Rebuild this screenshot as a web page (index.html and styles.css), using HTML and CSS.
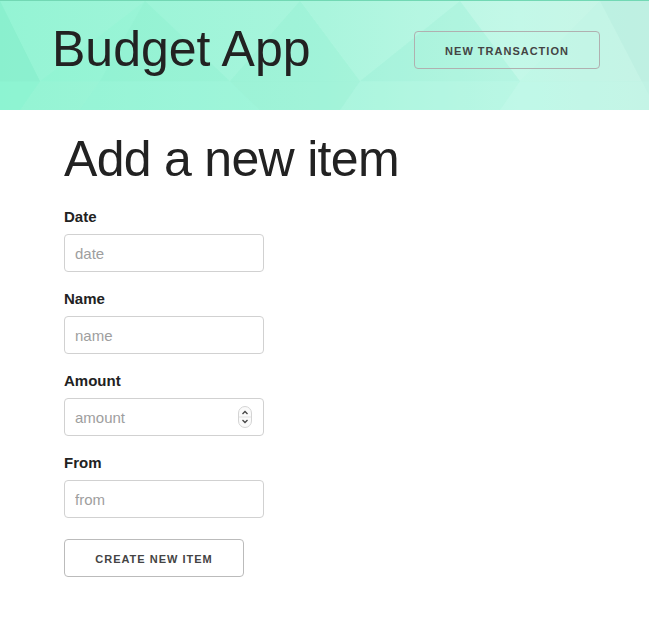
FILE: index.html
```html
<!DOCTYPE html>
<html lang="en">
<head>
<meta charset="utf-8">
<title>Budget App</title>
<link rel="stylesheet" href="styles.css">
</head>
<body>
<header class="header">
  <svg class="header-bg" width="649" height="110" viewBox="0 0 649 110" preserveAspectRatio="none" aria-hidden="true">
    <defs>
      <linearGradient id="g" x1="0" y1="0" x2="1" y2="0">
        <stop offset="0" stop-color="#8ff4d2"/>
        <stop offset="0.5" stop-color="#a6f5dc"/>
        <stop offset="0.8" stop-color="#bdf8e6"/>
        <stop offset="1" stop-color="#c4f2e4"/>
      </linearGradient>
    </defs>
    <rect width="649" height="110" fill="url(#g)"/>
    <polygon points="0,0 0,81 40,81" fill="#86ecca" opacity="0.45"/>
    <polygon points="40,81 145,0 0,0" fill="#ffffff" opacity="0.05"/>
    <polygon points="145,0 100,81 230,81" fill="#7fe8c6" opacity="0.14"/>
    <polygon points="230,81 300,0 145,0" fill="#ffffff" opacity="0.04"/>
    <polygon points="300,0 230,81 360,81" fill="#84e9c8" opacity="0.14"/>
    <polygon points="360,81 460,0 300,0" fill="#ffffff" opacity="0.05"/>
    <polygon points="460,0 360,81 520,81" fill="#8de8cb" opacity="0.16"/>
    <polygon points="520,81 600,0 460,0" fill="#ffffff" opacity="0.1"/>
    <polygon points="600,0 520,81 649,81 649,0" fill="#cdf9ec" opacity="0.25"/>
    <polygon points="600,0 649,0 649,95" fill="#b5ecdb" opacity="0.4"/>
    <polygon points="0,81 40,81 20,110 0,110" fill="#8cf3d1" opacity="0.5"/>
    <polygon points="40,81 100,81 80,110 20,110" fill="#ffffff" opacity="0.04"/>
    <polygon points="100,81 230,81 260,110 80,110" fill="#9af6d9" opacity="0.3"/>
    <polygon points="230,81 360,81 340,110 260,110" fill="#8fe9cc" opacity="0.2"/>
    <polygon points="360,81 520,81 500,110 340,110" fill="#b2f5e0" opacity="0.3"/>
    <polygon points="520,81 649,81 649,110 500,110" fill="#c6f9ea" opacity="0.35"/>
  </svg>
  <h1 class="brand">Budget App</h1>
  <button class="btn btn-header" type="button">New Transaction</button>
</header>

<main class="page">
  <h1 class="page-title">Add a new item</h1>
  <form class="item-form">
    <label class="field-label" for="date">Date</label>
    <input class="field-input" id="date" type="text" placeholder="date">

    <label class="field-label" for="name">Name</label>
    <input class="field-input" id="name" type="text" placeholder="name">

    <label class="field-label" for="amount">Amount</label>
    <div class="number-wrap">
      <input class="field-input field-number" id="amount" type="number" placeholder="amount">
      <svg class="spinner" width="14" height="22" viewBox="0 0 14 22" aria-hidden="true">
        <rect x="0.5" y="0.5" width="13" height="21" rx="6.5" fill="#fafafa" stroke="#d4d4d4"/>
        <line x1="1" y1="11" x2="13" y2="11" stroke="#e2e2e2"/>
        <polyline points="4.5,8 7,5.5 9.5,8" fill="none" stroke="#444" stroke-width="1.3"/>
        <polyline points="4.5,14 7,16.5 9.5,14" fill="none" stroke="#444" stroke-width="1.3"/>
      </svg>
    </div>

    <label class="field-label" for="from">From</label>
    <input class="field-input" id="from" type="text" placeholder="from">

    <button class="btn btn-create" type="button">Create new item</button>
  </form>
</main>
</body>
</html>
```

FILE: styles.css
```css
html, body {
  margin: 0;
  padding: 0;
  background: #fff;
}

body {
  font-family: "Liberation Sans", Arial, Helvetica, sans-serif;
  font-size: 15px;
  line-height: 1.6;
  color: #222;
}

.header {
  position: relative;
  height: 110px;
  box-sizing: border-box;
  display: flex;
  justify-content: space-between;
  align-items: flex-start;
  padding: 13px 49px 0 52px;
  overflow: hidden;
  border-top: 1px solid #72d8b4;
}

.header-bg {
  position: absolute;
  left: 0;
  top: 0;
  width: 100%;
  height: 100%;
  z-index: 0;
}

.brand {
  position: relative;
  z-index: 1;
  margin: 5px 0 0 0;
  font-size: 50px;
  line-height: 60px;
  font-weight: 400;
  letter-spacing: 0;
  color: #222;
}

.btn {
  box-sizing: border-box;
  height: 38px;
  padding: 0 30px;
  font-family: "Liberation Sans", Arial, Helvetica, sans-serif;
  font-size: 11px;
  font-weight: 700;
  line-height: 38px;
  letter-spacing: 1px;
  text-transform: uppercase;
  color: #555;
  background: transparent;
  border: 1px solid #bbb;
  border-radius: 4px;
  white-space: nowrap;
}

.btn-header {
  position: relative;
  z-index: 1;
  margin-top: 17px;
  width: 186px;
  color: #444;
  border-color: #b0b0b0;
}

.page {
  padding: 0 0 0 64px;
}

.page-title {
  margin: 19px 0 16px 0;
  font-size: 50px;
  line-height: 60px;
  font-weight: 400;
  letter-spacing: -0.7px;
  color: #222;
}

.item-form {
  display: flex;
  flex-direction: column;
  align-items: flex-start;
}

.field-label {
  display: block;
  font-weight: 700;
  font-size: 15px;
  line-height: 24px;
  margin-bottom: 5px;
  color: #222;
}

.field-input {
  box-sizing: border-box;
  width: 200px;
  height: 38px;
  padding: 6px 10px;
  margin: 0 0 15px 0;
  font-family: "Liberation Sans", Arial, Helvetica, sans-serif;
  font-size: 15px;
  color: #222;
  background: #fff;
  border: 1px solid #d1d1d1;
  border-radius: 4px;
  outline: none;
}

.field-input::placeholder {
  color: #9e9e9e;
}

.number-wrap {
  position: relative;
  width: 200px;
}

.field-number {
  -moz-appearance: textfield;
  appearance: textfield;
}

.field-number::-webkit-inner-spin-button,
.field-number::-webkit-outer-spin-button {
  -webkit-appearance: none;
  margin: 0;
}

.spinner {
  position: absolute;
  left: 174px;
  top: 8px;
}

.btn-create {
  margin-top: 6px;
  width: 180px;
  padding: 0;
  color: #444;
}
```
